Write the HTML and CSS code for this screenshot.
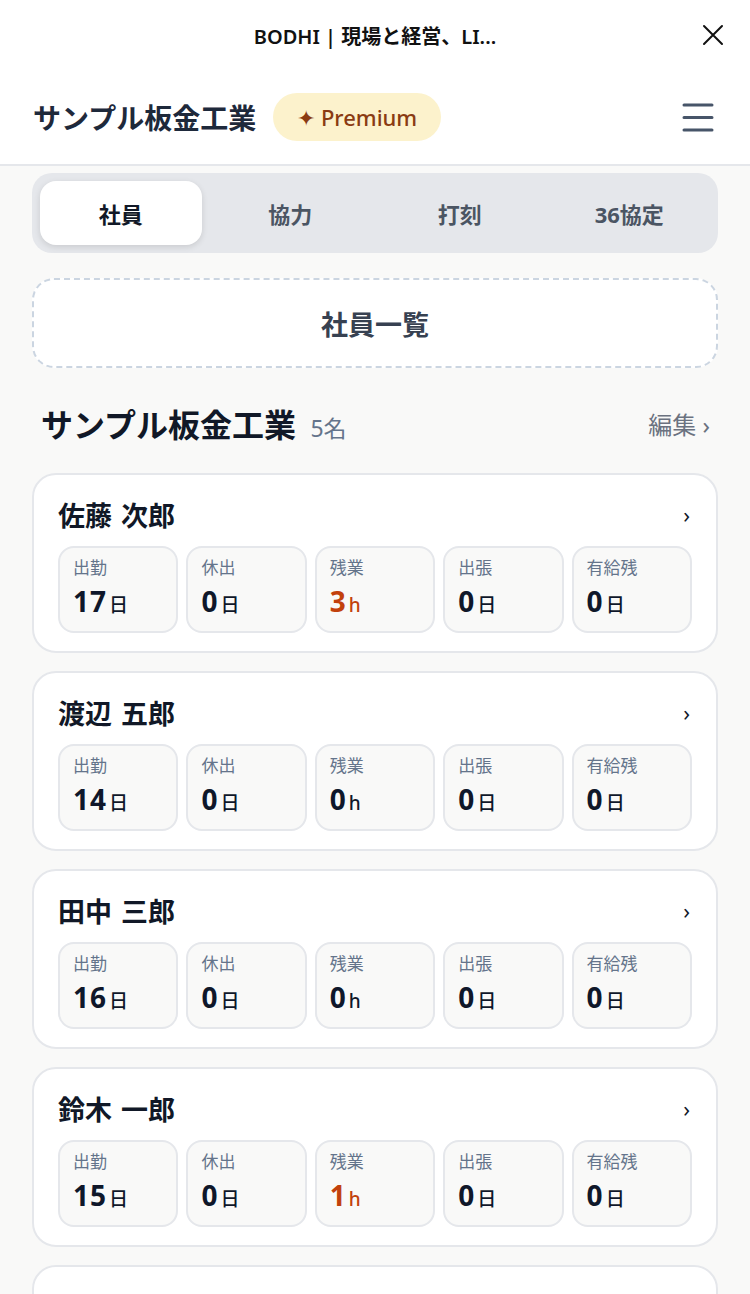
FILE: index.html
```html
<!DOCTYPE html>
<html lang="ja">
<head>
    <meta charset="UTF-8">
    <meta name="viewport" content="width=device-width, initial-scale=1.0">
    <title>社員一覧</title>
    <link rel="stylesheet" href="styles.css">
</head>
<body>
    <div class="topbar">
        <span class="topbar-title">BODHI | 現場と経営、LI...</span>
        <svg class="close-icon" width="22" height="22" viewBox="0 0 22 22">
            <path d="M2 2 L20 20 M20 2 L2 20" stroke="#111" stroke-width="2" stroke-linecap="round"/>
        </svg>
    </div>

    <header class="app-header">
        <div class="brand">
            <h1>サンプル板金工業</h1>
            <span class="premium">✦ Premium</span>
        </div>
        <svg class="menu-icon" width="32" height="30" viewBox="0 0 32 30">
            <path d="M2 3 H30 M2 15.5 H30 M2 28 H30" stroke="#475569" stroke-width="3" stroke-linecap="round"/>
        </svg>
    </header>

    <main class="page">
        <nav class="tabs">
            <a href="#" class="tab active">社員</a>
            <a href="#" class="tab">協力</a>
            <a href="#" class="tab">打刻</a>
            <a href="#" class="tab">36協定</a>
        </nav>

        <a href="#" class="list-button">社員一覧</a>

        <div class="section-head">
            <h2>サンプル板金工業 <span class="count">5名</span></h2>
            <a href="#" class="edit-link">編集 ›</a>
        </div>

        <div class="cards">
            <div class="card">
                <div class="card-head">
                    <span class="name">佐藤 次郎</span>
                    <span class="chevron">›</span>
                </div>
                <div class="stats">
                    <div class="stat"><span class="label">出勤</span><span class="value">17<small>日</small></span></div>
                    <div class="stat"><span class="label">休出</span><span class="value">0<small>日</small></span></div>
                    <div class="stat"><span class="label">残業</span><span class="value warn">3<small>h</small></span></div>
                    <div class="stat"><span class="label">出張</span><span class="value">0<small>日</small></span></div>
                    <div class="stat"><span class="label">有給残</span><span class="value">0<small>日</small></span></div>
                </div>
            </div>

            <div class="card">
                <div class="card-head">
                    <span class="name">渡辺 五郎</span>
                    <span class="chevron">›</span>
                </div>
                <div class="stats">
                    <div class="stat"><span class="label">出勤</span><span class="value">14<small>日</small></span></div>
                    <div class="stat"><span class="label">休出</span><span class="value">0<small>日</small></span></div>
                    <div class="stat"><span class="label">残業</span><span class="value">0<small>h</small></span></div>
                    <div class="stat"><span class="label">出張</span><span class="value">0<small>日</small></span></div>
                    <div class="stat"><span class="label">有給残</span><span class="value">0<small>日</small></span></div>
                </div>
            </div>

            <div class="card">
                <div class="card-head">
                    <span class="name">田中 三郎</span>
                    <span class="chevron">›</span>
                </div>
                <div class="stats">
                    <div class="stat"><span class="label">出勤</span><span class="value">16<small>日</small></span></div>
                    <div class="stat"><span class="label">休出</span><span class="value">0<small>日</small></span></div>
                    <div class="stat"><span class="label">残業</span><span class="value">0<small>h</small></span></div>
                    <div class="stat"><span class="label">出張</span><span class="value">0<small>日</small></span></div>
                    <div class="stat"><span class="label">有給残</span><span class="value">0<small>日</small></span></div>
                </div>
            </div>

            <div class="card">
                <div class="card-head">
                    <span class="name">鈴木 一郎</span>
                    <span class="chevron">›</span>
                </div>
                <div class="stats">
                    <div class="stat"><span class="label">出勤</span><span class="value">15<small>日</small></span></div>
                    <div class="stat"><span class="label">休出</span><span class="value">0<small>日</small></span></div>
                    <div class="stat"><span class="label">残業</span><span class="value warn">1<small>h</small></span></div>
                    <div class="stat"><span class="label">出張</span><span class="value">0<small>日</small></span></div>
                    <div class="stat"><span class="label">有給残</span><span class="value">0<small>日</small></span></div>
                </div>
            </div>

            <div class="card">
                <div class="card-head">
                    <span class="name">高橋 四郎</span>
                    <span class="chevron">›</span>
                </div>
                <div class="stats">
                    <div class="stat"><span class="label">出勤</span><span class="value">18<small>日</small></span></div>
                    <div class="stat"><span class="label">休出</span><span class="value">0<small>日</small></span></div>
                    <div class="stat"><span class="label">残業</span><span class="value">0<small>h</small></span></div>
                    <div class="stat"><span class="label">出張</span><span class="value">0<small>日</small></span></div>
                    <div class="stat"><span class="label">有給残</span><span class="value">0<small>日</small></span></div>
                </div>
            </div>
        </div>
    </main>
</body>
</html>
```

FILE: styles.css
```css
body {
    font-family: 'Noto Sans', 'Noto Sans CJK JP', sans-serif;
    background-color: #f9f9f8;
    color: #0f172a;
    margin: 0;
    padding: 0;
}

a {
    text-decoration: none;
}

.topbar {
    height: 70px;
    background-color: #fff;
    display: flex;
    align-items: center;
    justify-content: center;
    position: relative;
}

.topbar-title {
    font-size: 20px;
    font-weight: 600;
    color: #111;
}

.close-icon {
    position: absolute;
    right: 26px;
    top: 24px;
}

.app-header {
    height: 94px;
    background-color: #fff;
    border-bottom: 2px solid #e5e7eb;
    display: flex;
    align-items: center;
    justify-content: space-between;
    padding: 0 36px 0 33px;
}

.brand {
    display: flex;
    align-items: center;
    gap: 17px;
}

.brand h1 {
    margin: 0;
    font-size: 28px;
    font-weight: 700;
    color: #1e293b;
}

.premium {
    display: inline-flex;
    align-items: center;
    height: 48px;
    padding: 0 24px;
    border-radius: 24px;
    background-color: #fcf2cc;
    color: #8a3b12;
    font-size: 22px;
    font-weight: 500;
}

.page {
    padding: 7px 32px 0;
}

.tabs {
    display: grid;
    grid-template-columns: repeat(4, 1fr);
    gap: 8px;
    padding: 8px;
    background-color: #e5e7eb;
    border-radius: 20px;
}

.tab {
    height: 64px;
    display: flex;
    align-items: center;
    justify-content: center;
    border-radius: 16px;
    font-size: 22px;
    font-weight: 700;
    color: #4b5563;
}

.tab.active {
    background-color: #fff;
    color: #111827;
    box-shadow: 0 2px 6px rgba(0, 0, 0, 0.12);
}

.list-button {
    margin-top: 25px;
    height: 86px;
    display: flex;
    align-items: center;
    justify-content: center;
    background-color: #fff;
    border: 2px dashed #cbd5e1;
    border-radius: 22px;
    font-size: 27px;
    font-weight: 700;
    color: #374151;
}

.section-head {
    margin-top: 33px;
    padding: 0 8px 0 9px;
    display: flex;
    align-items: center;
    justify-content: space-between;
    height: 44px;
}

.section-head h2 {
    margin: 0;
    font-size: 32px;
    font-weight: 700;
    color: #111827;
}

.count {
    margin-left: 6px;
    font-size: 23px;
    font-weight: 400;
    color: #64748b;
}

.edit-link {
    font-size: 24px;
    color: #6b7280;
}

.cards {
    margin-top: 28px;
    display: flex;
    flex-direction: column;
    gap: 18px;
}

.card {
    background-color: #fff;
    border: 2px solid #e5e7eb;
    border-radius: 24px;
    padding: 22px 24px 18px;
}

.card-head {
    height: 34px;
    display: flex;
    align-items: center;
    justify-content: space-between;
}

.name {
    font-size: 27px;
    font-weight: 600;
    color: #111827;
    word-spacing: 2px;
}

.chevron {
    font-size: 22px;
    color: #111827;
    margin-right: 2px;
}

.stats {
    margin-top: 15px;
    display: grid;
    grid-template-columns: repeat(5, 1fr);
    gap: 8px;
}

.stat {
    background-color: #f9f9f8;
    border: 2px solid #e5e7eb;
    border-radius: 16px;
    padding: 9px 13px 10px;
    display: flex;
    flex-direction: column;
    gap: 6px;
}

.label {
    font-size: 17px;
    line-height: 22px;
    color: #64748b;
}

.value {
    font-size: 28px;
    line-height: 32px;
    font-weight: 700;
    color: #0f172a;
    letter-spacing: 1px;
}

.value small {
    font-size: 19px;
    font-weight: 500;
    margin-left: 2px;
}

.value.warn {
    color: #c2410c;
}
```
